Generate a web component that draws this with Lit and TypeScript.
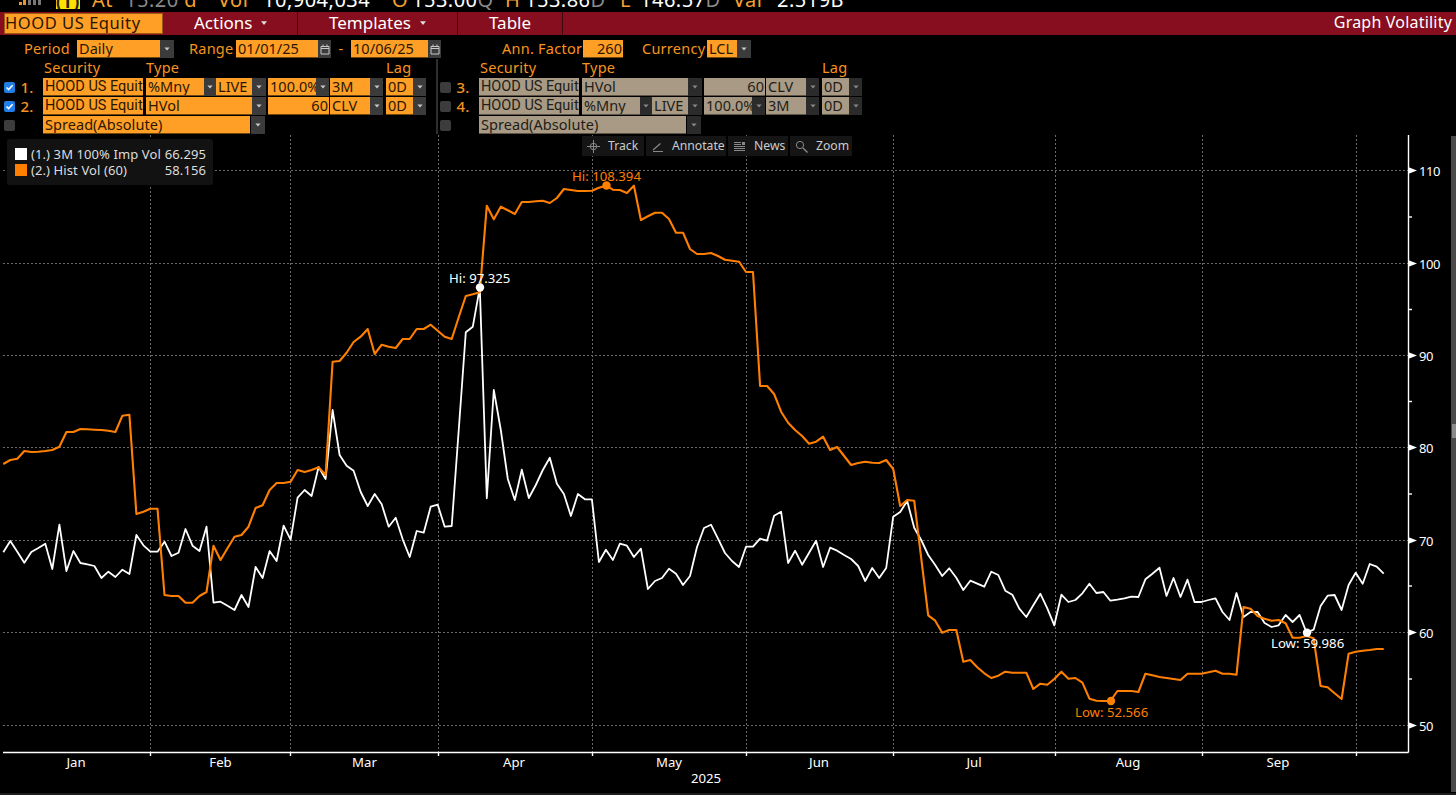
import { LitElement, html, css, svg } from "lit";
import { customElement } from "lit/decorators.js";

const WHITE = [552.3,541,551.7,562.7,552,548,543.7,569,524.7,571,551,563,564.3,566,578,571.7,577,569.7,574,535,545.3,551.7,551.7,541.7,556,552.7,529,545.7,551,526.7,602.7,601.7,605.7,610,595,607,567,578,551,561,525.7,539.7,497.7,490,496,467,479,410,455,465.7,470.7,492,506,494,504.3,526.7,517.7,539.3,557,531,532.7,506.7,504.7,526.7,526,429,332.3,326.7,287.6,498.3,390,430,479,500,469.7,498,485,470,457.7,483.7,494,516,494,499.3,499.3,562,549.7,560,543.7,545.7,557,548.7,589,581,578,568.7,573.7,585,576,547,528,524.7,538.7,553,561,567,546.7,546.7,538.7,540.7,515.7,511.7,563,550.7,564.7,552.7,540.7,567,547.7,550.7,555,559,566,581,568,578,568,516.7,512,501,527.7,540,555,565,576,568.3,577.7,590,580.7,583.7,586.7,571.7,575,590.7,594.7,608.7,617,605.3,593.7,608.3,625.3,594.7,602,600,593.3,583.7,593,592,600.7,599.7,598.3,596.7,597,579.3,573.7,567.7,596,578,597,579.7,602,602,600,598.3,612,620,593,617,612,612,623,627,625.3,615,622,615,632.7,629.7,606,595.7,595,610,585,572.7,583.7,564,566.7,573.7];
const ORANGE = [464,460,458.7,451,452,451.7,451,450,446.7,432,432,429,429.3,429.7,430,430.7,432,415.7,414.7,514,511.7,508.7,508.7,595,596,596,602.7,602.7,596,592,545.7,560,548.3,536.7,535,526.7,508,505.3,490,483,483,481.7,470,472,470,467.3,475,361.7,361,352.7,342,336.7,329,354,344.7,346.7,348,339,339,329,329,324.7,330.7,336.7,339,317,296,294.3,292.3,205.7,219.3,206.7,210.3,214,202,202,201.3,200.7,203,198,189,190,191,191,190.7,187.7,185.7,189.7,190,193,185.7,220,216.3,212.7,212.7,219,232.7,232.7,249,254,254,253,256,259.7,260.7,261.7,272,272,386,386,394,411.7,422.7,430,436,443.7,441.7,436.7,450,447,456,465,463,461.7,462.7,463,460,469,506,500,500.7,558,615.3,620.7,632.7,630,630,661.7,660,667.3,673.3,678,675.7,671.7,672.7,672.7,672.7,689,683.7,684.7,679,671.7,678.7,678,682.7,698.7,700.7,701,701,691,691,691,692,673.7,675.3,677,678,679,680,673.7,673.7,673.7,672.3,670.7,673.7,673.7,674.7,607,608.7,616,618.7,620.7,620,623.3,637.7,637.7,636,638.3,686,687.3,693.3,699,653.7,651.7,650.7,650,649,649];

const pts = (ys: number[]) => ys.map((y, i) => `${(3.3 + 7.007 * i).toFixed(1)},${y}`).join(" ");
const VX = [150.5, 290.5, 438.5, 592.5, 746.5, 893.5, 1055.5, 1202.5, 1356.5];
const AXIS = [[110,170.5],[100,263.5],[90,355.5],[80,447.5],[70,540.5],[60,632.5],[50,725.5]];
const MINOR = [217,309.5,401.5,494,586,679];
const MONTHS: [string, number][] = [["Jan",76],["Feb",220.5],["Mar",364.5],["Apr",514],["May",669],["Jun",819],["Jul",974],["Aug",1128],["Sep",1278]];

const tri = html`<svg class="tri" viewBox="0 0 8 5"><path d="M0.5 0.5H7.5L4 4.5Z"/></svg>`;
const cal = html`<svg class="cal" viewBox="0 0 10 11"><path d="M1 2.5H9V10H1ZM1 4.5H9M3 .5V2.5M7 .5V2.5" fill="none" stroke="currentColor" stroke-width="1"/></svg>`;

@customElement("vol-chart")
class VolChart extends LitElement {
  static styles = css`
    :host { display: block; position: relative; height: 660px; }
    svg { display: block; }
    .gl { stroke: #6a6a6a; stroke-width: 1; stroke-dasharray: 2 2; }
    .ax { stroke: #fff; stroke-width: 1.4; }
    text { font-family: "Noto Sans", sans-serif; font-size: 13.2px; fill: #fff; }
    .axl { font-size: 13px; letter-spacing: -.4px; }
    .o { fill: #ff7f00; }
    .legend { position: absolute; left: 7px; top: 4px; width: 206px; height: 46px; background: #121212; border-radius: 3px;
      box-sizing: border-box; padding: 7px 7px 0 8px; color: #ddd; font: 13px/16px "Noto Sans", sans-serif; letter-spacing: .1px; }
    .lr { display: flex; align-items: center; height: 16px; white-space: nowrap; }
    .sw { width: 12px; height: 12px; margin-right: 4px; background: #fff; }
    .sw.or { background: #ff7f00; }
    .lr b { font-weight: 400; margin-left: auto; }
    .tools { position: absolute; left: 582px; top: 1px; display: flex; gap: 2px; height: 20px; color: #ccc; font: 12.2px/20px "Noto Sans", sans-serif; }
    .tool { background: #151515; display: flex; align-items: center; box-sizing: border-box; padding-left: 5px; gap: 8px; }
    .tool svg { width: 13px; height: 13px; flex: none; }
    .t1 { width: 62px; } .t2 { width: 80px; } .t3 { width: 60px; } .t4 { width: 62px; }
    .bar { position: absolute; left: 1451px; top: 1px; bottom: 3px; width: 5px; background: #4a4a4a; }
    .thumb { position: absolute; left: 1px; top: 288px; width: 4px; height: 14px; background: #8a8a8a; }
    .foot { position: absolute; left: 0; right: 0; bottom: 0; height: 2px; background: #1d1d1d; }
  `;
  render() {
    return html`
      <svg width="1456" height="660" viewBox="0 135 1456 660">
        ${VX.map(x => svg`<line class="gl" x1=${x} x2=${x} y1="135" y2="752"/>
          <line class="ax" x1=${x} x2=${x} y1="752" y2="756"/>`)}
        ${AXIS.map(([, y]) => svg`<line class="gl" x1="3" x2="1408" y1=${y} y2=${y}/>`)}
        <line class="ax" x1="3" x2="1408.5" y1="752.5" y2="752.5"/>
        <line class="ax" x1="1408.5" x2="1408.5" y1="135" y2="752.5"/>
        ${MINOR.map(y => svg`<line class="ax" x1="1408" x2="1412" y1=${y} y2=${y}/>`)}
        ${AXIS.map(([v, y]) => svg`<path d="M1408 ${y - 3.5}L1417 ${y}L1408 ${y + 3.5}Z" fill="#fff"/>
          <text class="axl" x="1419" y=${y + 5}>${v}</text>`)}
        ${MONTHS.map(([m, x]) => svg`<text x=${x} y="767" text-anchor="middle">${m}</text>`)}
        <text x="706" y="783" text-anchor="middle">2025</text>
        <polyline points=${pts(WHITE)} fill="none" stroke="#fff" stroke-width="1.8" stroke-linejoin="round"/>
        <polyline points=${pts(ORANGE)} fill="none" stroke="#ff7f00" stroke-width="2.1" stroke-linejoin="round"/>
        <circle cx="480" cy="287.5" r="4.2" fill="#fff"/>
        <circle cx="606.5" cy="185.5" r="4.2" fill="#ff7f00"/>
        <circle cx="1307" cy="632.7" r="4.2" fill="#fff"/>
        <circle cx="1111" cy="701" r="4.2" fill="#ff7f00"/>
        <text x="449" y="283">Hi: 97.325</text>
        <text class="o" x="572" y="181">Hi: 108.394</text>
        <text x="1271" y="648">Low: 59.986</text>
        <text class="o" x="1075" y="717">Low: 52.566</text>
      </svg>
      <div class="legend">
        <div class="lr"><span class="sw"></span>(1.) 3M 100% Imp Vol<b>66.295</b></div>
        <div class="lr"><span class="sw or"></span>(2.) Hist Vol (60)<b>58.156</b></div>
      </div>
      <div class="tools">
        <div class="tool t1"><svg viewBox="0 0 13 13" fill="none" stroke="#888"><circle cx="6.5" cy="6.5" r="3.2"/><path d="M6.5 0V13M0 6.5H13"/></svg>Track</div>
        <div class="tool t2"><svg viewBox="0 0 13 13" fill="none" stroke="#888" stroke-width="1.2"><path d="M2 10L9.5 3.5M2 11.5H12" /></svg>Annotate</div>
        <div class="tool t3"><svg viewBox="0 0 13 13" fill="none" stroke="#888"><path d="M1 2.5H8M1 4.5H8M1 6.5H12M1 8.5H12M1 10.5H12"/><rect x="9" y="2" width="3" height="3" fill="#888" stroke="none"/></svg>News</div>
        <div class="tool t4"><svg viewBox="0 0 13 13" fill="none" stroke="#888"><circle cx="5" cy="5" r="3.6"/><path d="M8 8L12.5 12.5" stroke-width="1.4"/></svg>Zoom</div>
      </div>
      <div class="bar"><div class="thumb"></div></div>
      <div class="foot"></div>
    `;
  }
}

@customElement("app-root")
class AppRoot extends LitElement {
  static styles = css`
    :host { display: block; width: 1456px; height: 795px; background: #000; overflow: hidden; font-family: "Noto Sans", sans-serif; }
    .ticker { height: 12px; overflow: hidden; display: grid; align-items: end; font-size: 20px; line-height: 20px; color: #fff;
      grid-template-columns: 37px 36px 33px 93px 45px 129px 20px 93px 20px 95px 20px 93px 44px 60px; padding-left: 19px; }
    .ticker > span { display: block; white-space: nowrap; height: 20px; transform: translateY(-10px); letter-spacing: .5px; }
    .a { color: #f5a030; } .g { color: #8a8a8a; }
    .bars { display: flex; align-items: flex-end; height: 5px; align-self: start; }
    .bars i { display: block; width: 3px; height: 5px; background: #777; margin-right: 2px; }
    .bars i.o1 { background: #e8962a; height: 3px; margin-right: 1px; }
    .bars i.o2 { background: #e8962a; margin-right: 2px; }
    .yel { background: #ffe100; height: 9px; width: 24px; align-self: start; color: #222; font: 700 17px/3px "Noto Sans", sans-serif; letter-spacing: 1px; text-align: center; overflow: hidden; }
    .menu { height: 23px; background: #870e1e; display: flex; color: #fff; font-size: 17px; line-height: 21px; }
    .sec-in { width: 159px; margin: 1px 0 1px 4px; box-sizing: border-box; background: #ff9f26; border: 1px solid #9a5a12; color: #2a1700; letter-spacing: .55px; font-size: 16.5px; line-height: 18px; white-space: nowrap; }
    .mi { border-right: 1px solid #3d0710; display: flex; align-items: center; box-sizing: border-box; padding: 0 0 2px 31px; gap: 9px; }
    .mi svg { width: 6px; height: 4px; fill: #ddd; }
    .m1 { width: 135px; } .m2 { width: 160px; } .m3 { width: 105px; }
    .title { margin-left: auto; padding-right: 4px; font-size: 16px; letter-spacing: .2px; }
    .line { display: flex; height: 18px; margin-top: 5px; font-size: 14.5px; line-height: 17px; }
    .lbl { color: #f7941e; white-space: nowrap; letter-spacing: .25px; }
    .f { box-sizing: border-box; background: #ff9f26; color: #2a1700; padding: 0 1px 0 2px; font-size: 14.5px; line-height: 17px; white-space: nowrap; overflow: hidden; letter-spacing: .05px; border: 1px solid #6e4610; border-width: 0 0 1px 0; }
    .h { font-family: Roboto, sans-serif; letter-spacing: 0; padding-top: 1px; line-height: 16px; }
    .r { text-align: right; }
    .b { box-sizing: border-box; background: #3b3b3b; display: flex; align-items: center; justify-content: center; color: #c9c9c9; }
    .tri { width: 6px; height: 4px; fill: currentColor; }
    .cal { width: 10px; height: 11px; }
    .ml24 { margin-left: 24px; } .w53 { width: 53px; } .w83 { width: 83px; } .w14 { width: 14px; } .ml15 { margin-left: 15px; }
    .w47 { width: 47px; } .w82 { width: 82px; } .w13 { width: 13px; } .dash { width: 20px; text-align: center; }
    .w77 { width: 77px; } .ml61 { margin-left: 61px; } .w81 { width: 81px; } .w40 { width: 40px; } .ml19 { margin-left: 19px; } .w65 { width: 65px; } .w30 { width: 30px; }
    .blocks { display: flex; margin: 1px 0 1px; padding-left: 4px; }
    .blk { display: grid; width: 432px; height: 75px; row-gap: 1px;
      grid-template-columns: 11px 28px 100px 3px 58px 12px 36px 14px 2px 48px 13px 1px 40px 13px 3px 27px 13px;
      grid-template-rows: repeat(4, 18px); font-size: 14.5px; }
    .div { width: 2px; height: 75px; background: #2e2e2e; margin-right: 2px; }
    .blk .lbl { line-height: 17px; }
    .blk .num { text-align: center; padding-right: 4px; line-height: 18px; font-size: 15px; font-weight: 500; }
    .chk { width: 11px; height: 11px; align-self: center; border-radius: 2px; background: #3c3c3c; grid-column: 1; display: block; }
    .chk.on { background: #1f7fe6; }
    .off .f { background: #a89a85; color: #221d16; border-color: #5e5445; }
    .off .b { background: #2b2b2b; color: #888; }
    .sp { grid-column: 3 / 8; margin-right: 2px; }
    .spb { grid-column: 8; margin-left: -1px; margin-right: 1px; }
    .c3 { grid-column: 3; } .c5 { grid-column: 5; } .c6 { grid-column: 6; } .c7 { grid-column: 7; } .c8 { grid-column: 8; }
    .c10 { grid-column: 10; } .c11 { grid-column: 11; } .c13 { grid-column: 13; } .c14 { grid-column: 14; } .c16 { grid-column: 16; } .c17 { grid-column: 17; }
    .c57 { grid-column: 5 / 8; } .c1012 { grid-column: 10 / 12; } .c2 { grid-column: 2; }
    .pad { padding-left: 1px; }
  `;

  private imp() {
    return html`
      <div class="f c5">%Mny</div><div class="b c6">${tri}</div>
      <div class="f c7">LIVE</div><div class="b c8">${tri}</div>
      <div class="f c10">100.0%</div><div class="b c11">${tri}</div>
      <div class="f c13">3M</div><div class="b c14">${tri}</div>`;
  }
  private hist() {
    return html`
      <div class="f c57">HVol</div><div class="b c8">${tri}</div>
      <div class="f c1012 r">60</div>
      <div class="f c13">CLV</div><div class="b c14">${tri}</div>`;
  }
  private block(off: boolean, nums: string[], rows: unknown[]) {
    const box = (on: boolean) => html`<svg class="chk ${on ? "on" : ""}" viewBox="0 0 11 11">${on ? svg`<path d="M2.5 5.5L4.6 7.6L8.6 3.2" fill="none" stroke="#fff" stroke-width="1.6"/>` : ""}</svg>`;
    return html`<div class="blk ${off ? "off" : ""}">
      <span class="lbl c3 pad">Security</span><span class="lbl c5">Type</span><span class="lbl c16">Lag</span>
      ${rows.map((r, i) => html`
        ${box(!off)}<span class="lbl num c2">${nums[i]}</span>
        <div class="f h c3">HOOD US Equit</div>${r}
        <div class="f c16">0D</div><div class="b c17">${tri}</div>`)}
      ${box(false)}<div class="f sp">Spread(Absolute)</div><div class="b spb">${tri}</div>
    </div>`;
  }

  render() {
    return html`
      <div class="ticker">
        <div class="bars"><i class="o1"></i><i class="o2"></i><i></i><i></i><i></i></div>
        <div class="yel">(T)</div>
        <span class="a">At</span><span class="g">15:20 <span class="a">d</span></span>
        <span class="a">Vol</span><span>10,904,034</span>
        <span class="a">O</span><span>153.00<span class="g">Q</span></span>
        <span class="a">H</span><span>153.86<span class="g">D</span></span>
        <span class="a">L</span><span>146.57<span class="g">D</span></span>
        <span class="a">Val</span><span>2.519B</span>
      </div>
      <div class="menu">
        <div class="sec-in">HOOD US Equity</div>
        <div class="mi m1">Actions <svg viewBox="0 0 8 5"><path d="M0 0H8L4 5Z"/></svg></div>
        <div class="mi m2">Templates <svg viewBox="0 0 8 5"><path d="M0 0H8L4 5Z"/></svg></div>
        <div class="mi m3">Table</div>
        <div class="title">Graph Volatility</div>
      </div>
      <div class="line">
        <span class="lbl ml24 w53">Period</span>
        <div class="f w83">Daily</div><div class="b w14">${tri}</div>
        <span class="lbl ml15 w47">Range</span>
        <div class="f w82">01/01/25</div><div class="b w13">${cal}</div>
        <span class="lbl dash">-</span>
        <div class="f w77">10/06/25</div><div class="b w13">${cal}</div>
        <span class="lbl ml61 w81">Ann. Factor</span>
        <div class="f w40 r">260</div>
        <span class="lbl ml19 w65">Currency</span>
        <div class="f w30">LCL</div><div class="b w14">${tri}</div>
      </div>
      <div class="blocks">
        ${this.block(false, ["1.", "2."], [this.imp(), this.hist()])}
        <div class="div"></div>
        ${this.block(true, ["3.", "4."], [this.hist(), this.imp()])}
      </div>
      <vol-chart></vol-chart>
    `;
  }
}
